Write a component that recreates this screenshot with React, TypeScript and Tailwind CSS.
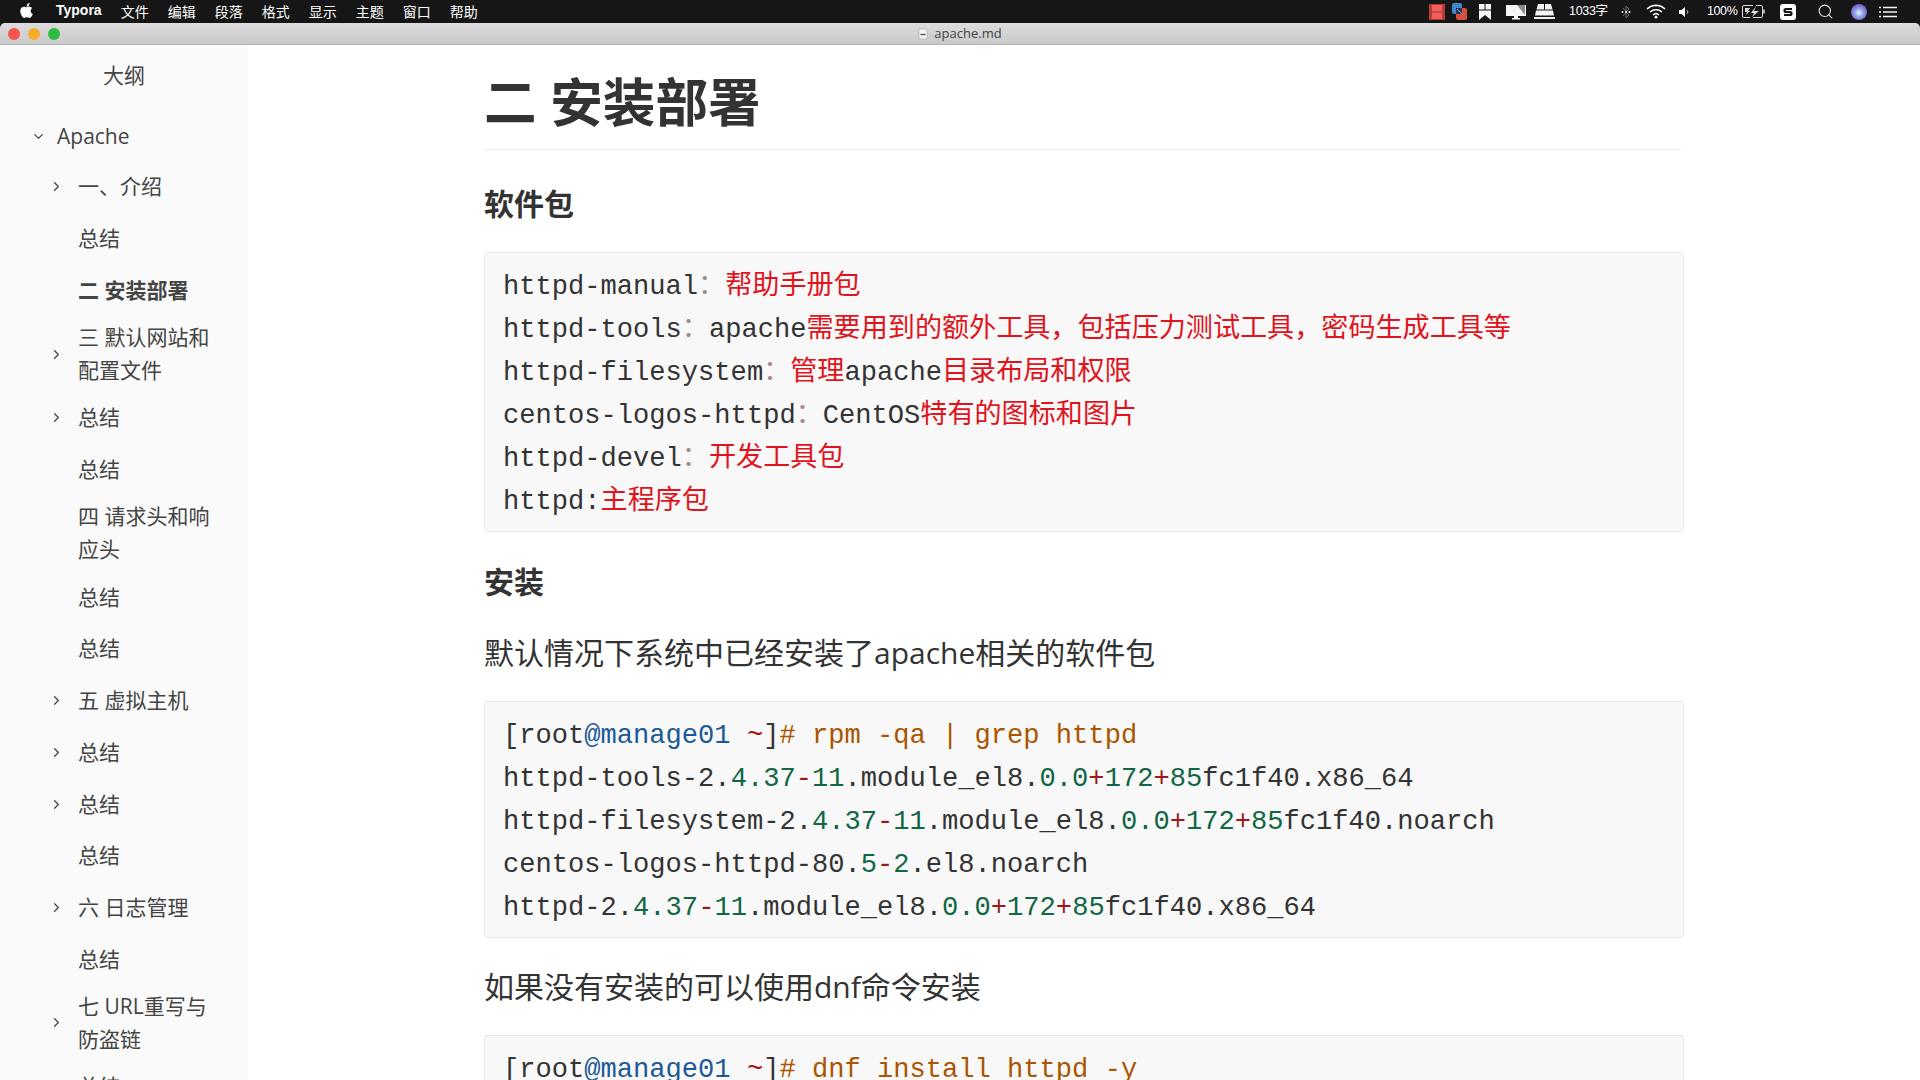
import { ChevronDown, ChevronRight, Search } from 'lucide-react';
import { FaApple } from 'react-icons/fa';

const menus = ['文件', '编辑', '段落', '格式', '显示', '主题', '窗口', '帮助'];

const outline = [
  { label: '一、介绍', arrow: true },
  { label: '总结' },
  { label: '二 安装部署', active: true },
  { label: '三 默认网站和配置文件', arrow: true, tall: true },
  { label: '总结', arrow: true },
  { label: '总结' },
  { label: '四 请求头和响应头', tall: true },
  { label: '总结' },
  { label: '总结' },
  { label: '五 虚拟主机', arrow: true },
  { label: '总结', arrow: true },
  { label: '总结', arrow: true },
  { label: '总结' },
  { label: '六 日志管理', arrow: true },
  { label: '总结' },
  { label: '七 URL重写与防盗链', arrow: true, tall: true },
  { label: '总结' },
];

const COMMA = '\uFF0C';

function Red({ children }: { children: React.ReactNode }) {
  return <span className="text-[#e0141c]">{children}</span>;
}
function Colon() {
  return <span className="text-[#a58a8a]">{'\uFF1A'}</span>;
}
function Num({ children }: { children: React.ReactNode }) {
  return <span className="text-[#116644]">{children}</span>;
}
function Op({ children }: { children: React.ReactNode }) {
  return <span className="text-[#981a1a]">{children}</span>;
}
function Brown({ children }: { children: React.ReactNode }) {
  return <span className="text-[#aa5500]">{children}</span>;
}

function Prompt({ cmd }: { cmd: string }) {
  return (
    <div>
      [root<span className="text-[#1c5a96]">@manage01</span> <span className="text-[#aa1111]">~</span>]<Brown># {cmd}</Brown>
    </div>
  );
}

function Code({ children }: { children: React.ReactNode }) {
  return (
    <div className="mt-[26px] rounded-[3px] border border-[#e7eaed] bg-[#f8f8f8] px-[18px] pt-[12px] pb-[8px] font-['Liberation_Mono','Noto_Sans_CJK_SC',monospace] text-[27.1px] leading-[43px] whitespace-pre text-[#333333]">
      {children}
    </div>
  );
}

function StatusIcons() {
  return (
    <div className="ml-auto flex h-full items-center pr-[23px] font-['Liberation_Sans','Noto_Sans_CJK_SC',sans-serif] text-[12px] text-white">
      {/* film strip */}
      <svg width="16" height="16" viewBox="0 0 16 16" className="mr-[7px]">
        <rect width="16" height="16" fill="#b93a3a" />
        <rect x="3" y="1" width="10" height="6.4" fill="#ef5f5c" />
        <rect x="3" y="8.6" width="10" height="6.4" fill="#ef5f5c" />
      </svg>
      {/* overlapped windows */}
      <svg width="15" height="17" viewBox="0 0 15 17" className="mr-[12px]">
        <rect x="0" y="0" width="10" height="11" rx="2" fill="#3f86cc" />
        <rect x="4" y="5" width="11" height="12" rx="2" fill="#d5503f" />
        <rect x="4" y="5" width="6" height="6" fill="#2a3550" />
        <path d="M5 6l6 6" stroke="#7fa8d8" strokeWidth="1" />
      </svg>
      {/* bookmark */}
      <svg width="12" height="16" viewBox="0 0 12 16" className="mr-[15px]">
        <path d="M0 0h12v16l-6-5-6 5z" fill="#f4f4f4" />
        <path d="M6 0v6M0 6h12" stroke="#161616" strokeWidth="1" />
      </svg>
      {/* display */}
      <svg width="20" height="16" viewBox="0 0 20 16" className="mr-[8px]">
        <path d="M0 1h20v11H0z" fill="#f4f4f4" />
        <path d="M11 1l8 10V1z" fill="#8a8a8a" />
        <path d="M8 12h4v2H8zM6 14h8v1.5H6z" fill="#f4f4f4" />
      </svg>
      {/* bars */}
      <svg width="21" height="15" viewBox="0 0 21 15" className="mr-[14px]">
        <path d="M4 0h13l1.5 5.5h-16zM2 6.5h17l1 5H1z" fill="#f4f4f4" />
        <path d="M10.5 0v5.5" stroke="#161616" strokeWidth="1" />
        <path d="M0 13h21v2H0z" fill="#f4f4f4" />
      </svg>
      <span className="mr-[14px] w-[38px] text-[12.5px] tracking-[-0.3px] whitespace-nowrap">1033字</span>
      {/* bluetooth with dots */}
      <svg width="10" height="16" viewBox="0 0 10 16" className="mr-[15px]">
        <path d="M2 4l6 7-3 3V2l3 3-6 7" fill="none" stroke="#6f6f6f" strokeWidth="1" />
        <circle cx="1.5" cy="8" r="1" fill="#eeeeee" />
        <circle cx="5" cy="8" r="1" fill="#eeeeee" />
        <circle cx="8.5" cy="8" r="1" fill="#eeeeee" />
      </svg>
      <svg width="20" height="15" viewBox="0 0 20 15" className="mr-[13px]">
        <path d="M1 5a13 13 0 0 1 18 0M4 8a9 9 0 0 1 12 0M7 11a4.5 4.5 0 0 1 6 0" fill="none" stroke="#f4f4f4" strokeWidth="1.6" />
        <circle cx="10" cy="13.2" r="1.4" fill="#f4f4f4" />
      </svg>
      <svg width="10" height="12" viewBox="0 0 10 12" className="mr-[18px]">
        <path d="M0 4h2.5L6 1v10L2.5 8H0z" fill="#f4f4f4" />
        <path d="M8 4a3 3 0 0 1 0 4" fill="none" stroke="#aaaaaa" strokeWidth="1" />
      </svg>
      <span className="mr-[5px] w-[30px] text-[12.5px] tracking-[-0.4px] whitespace-nowrap">100%</span>
      {/* battery charging */}
      <svg width="23" height="13" viewBox="0 0 23 13" className="mr-[15px]">
        <path d="M11 0.5H2a1.5 1.5 0 0 0-1.5 1.5v9A1.5 1.5 0 0 0 2 12.5h6M14 0.5h5a1.5 1.5 0 0 1 1.5 1.5v9a1.5 1.5 0 0 1-1.5 1.5h-8" fill="none" stroke="#dddddd" />
        <path d="M22 4.5v4" stroke="#dddddd" strokeWidth="1.5" />
        <path d="M3 3h5l-2 3h2l-4 4 1-3H3zM14 1l-2 5h5l-7 6 2-4H9z" fill="#dddddd" />
      </svg>
      <svg width="16" height="16" viewBox="0 0 16 16" className="mr-[21px]">
        <rect width="16" height="16" rx="3" fill="#ffffff" />
        <path d="M12 5H6a1.5 1.5 0 0 0 0 3h4a1.5 1.5 0 0 1 0 3H4" fill="none" stroke="#161616" strokeWidth="2.2" />
      </svg>
      <Search size={17} strokeWidth={1.5} className="mr-[17px] text-[#e5e5e5]" />
      {/* siri */}
      <div className="mr-[12px] size-[16px] rounded-full bg-[radial-gradient(circle_at_50%_55%,#f0f0ff_0%,#8fa6ea_35%,#7b5bc4_70%,#c45fa0_100%)]" />
      <svg width="18" height="12" viewBox="0 0 18 12">
        <path d="M4 1.5h14M4 6h14M4 10.5h14M0 1.5h2M0 6h2M0 10.5h2" stroke="#f4f4f4" strokeWidth="1.7" />
      </svg>
    </div>
  );
}

export default function App() {
  return (
    <div className="flex h-screen flex-col overflow-hidden bg-[#161616] font-['Open_Sans','Noto_Sans_CJK_SC',sans-serif] text-[#333333]">
      <header className="flex h-[23px] shrink-0 items-center text-white">
        <FaApple size={17} className="mr-[21px] mb-[2px] ml-[18px]" />
        <span className="mr-[19px] mb-[2px] font-['Liberation_Sans',sans-serif] text-[14px] font-bold">Typora</span>
        <nav className="mb-[2px] flex gap-[19px] font-['Noto_Sans_CJK_SC',sans-serif] text-[14px] leading-none">
          {menus.map((m) => (
            <span key={m}>{m}</span>
          ))}
        </nav>
        <StatusIcons />
      </header>

      <div className="relative flex h-[22px] shrink-0 items-center justify-center rounded-t-[5px] border-b border-[#b4b4b4] bg-gradient-to-b from-[#dcdcdc] to-[#c9c9c9]">
        <div className="absolute top-[5px] left-[8px] flex gap-[8px]">
          <span className="size-[12px] rounded-full bg-[#f4544c]" />
          <span className="size-[12px] rounded-full bg-[#f6ae2a]" />
          <span className="size-[12px] rounded-full bg-[#2bbd40]" />
        </div>
        <svg width="10" height="12" viewBox="0 0 10 12" className="mt-[1px] mr-[6px]">
          <path d="M1 1h6l2 2v8H1z" fill="#f4f4f4" stroke="#a5a5a5" strokeWidth="0.6" />
          <path d="M2.5 6.5h5" stroke="#555555" strokeWidth="1.4" />
        </svg>
        <span className="mt-[1px] text-[13px] text-[#444444]">apache.md</span>
      </div>

      <div className="flex min-h-0 flex-1 bg-white">
        <aside className="w-[248px] shrink-0 bg-[#fafafa] text-[21px] text-[#444444]">
          <div className="pt-[14px] pb-[17px] text-center leading-[33px]">大纲</div>
          <div className="flex h-[52px] items-center pt-[3px]">
            <ChevronDown size={15} className="mr-[11px] ml-[31px]" />
            Apache
          </div>
          {outline.map((item, i) => (
            <div key={i} className={`flex items-center ${item.tall ? 'h-[76px]' : 'h-[51.7px]'} ${item.active ? 'font-semibold' : ''}`}>
              <div className="flex w-[78px] shrink-0 justify-end pr-[14px]">
                {item.arrow && <ChevronRight size={15} />}
              </div>
              <div className="w-[142px] leading-[33px]">{item.label}</div>
            </div>
          ))}
        </aside>

        <main className="ml-[236px] w-[1200px] shrink-0">
          <h1 className="mt-[22px] mr-[3px] border-b border-[#eeeeee] pb-[12px] text-[52.6px] leading-[70px] font-semibold">二 安装部署</h1>

          <h2 className="mt-[32px] text-[30px] leading-[44px] font-semibold">软件包</h2>
          <Code>
            <div>httpd-manual<Colon /><Red>帮助手册包</Red></div>
            <div>httpd-tools<Colon />apache<Red>需要用到的额外工具{COMMA}包括压力测试工具{COMMA}密码生成工具等</Red></div>
            <div>httpd-filesystem<Colon /><Red>管理</Red>apache<Red>目录布局和权限</Red></div>
            <div>centos-logos-httpd<Colon />CentOS<Red>特有的图标和图片</Red></div>
            <div>httpd-devel<Colon /><Red>开发工具包</Red></div>
            <div>httpd:<Red>主程序包</Red></div>
          </Code>

          <h2 className="mt-[28px] text-[30px] leading-[44px] font-semibold">安装</h2>
          <p className="mt-[27px] text-[30px] leading-[44px]">默认情况下系统中已经安装了apache相关的软件包</p>
          <Code>
            <Prompt cmd="rpm -qa | grep httpd" />
            <div>httpd-tools-2.<Num>4.37</Num><Op>-</Op><Num>11</Num>.module_el8.<Num>0.0</Num><Op>+</Op><Num>172</Num><Op>+</Op><Num>85</Num>fc1f40.x86_64</div>
            <div>httpd-filesystem-2.<Num>4.37</Num><Op>-</Op><Num>11</Num>.module_el8.<Num>0.0</Num><Op>+</Op><Num>172</Num><Op>+</Op><Num>85</Num>fc1f40.noarch</div>
            <div>centos-logos-httpd-80.<Num>5</Num><Op>-</Op><Num>2</Num>.el8.noarch</div>
            <div>httpd-2.<Num>4.37</Num><Op>-</Op><Num>11</Num>.module_el8.<Num>0.0</Num><Op>+</Op><Num>172</Num><Op>+</Op><Num>85</Num>fc1f40.x86_64</div>
          </Code>
          <p className="mt-[27px] text-[30px] leading-[44px]">如果没有安装的可以使用dnf命令安装</p>
          <Code>
            <Prompt cmd="dnf install httpd -y" />
          </Code>
        </main>
      </div>
    </div>
  );
}
